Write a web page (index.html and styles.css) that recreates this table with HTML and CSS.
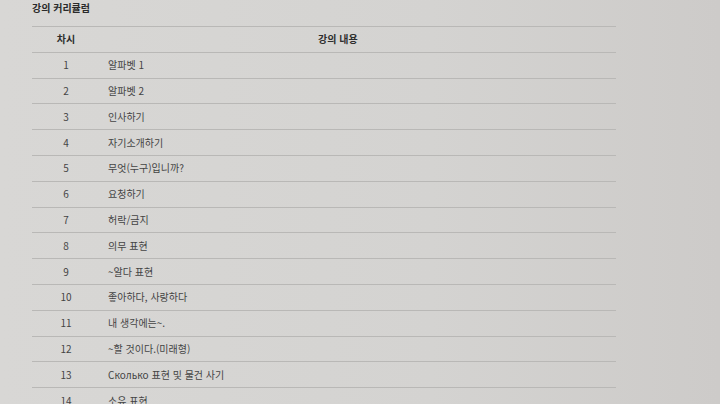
FILE: index.html
```html
<!DOCTYPE html>
<html lang="ko">
<head>
    <meta charset="UTF-8">
    <meta name="viewport" content="width=device-width, initial-scale=1.0">
    <title>강의 커리큘럼</title>
    <link rel="stylesheet" href="styles.css">
</head>
<body>
    <div class="curriculum">
        <h3>강의 커리큘럼</h3>
        <table class="lessons">
            <thead>
                <tr>
                    <th class="num">차시</th>
                    <th class="title">강의 내용</th>
                </tr>
            </thead>
            <tbody>
                <tr><td class="num">1</td><td>알파벳 1</td></tr>
                <tr><td class="num">2</td><td>알파벳 2</td></tr>
                <tr><td class="num">3</td><td>인사하기</td></tr>
                <tr><td class="num">4</td><td>자기소개하기</td></tr>
                <tr><td class="num">5</td><td>무엇(누구)입니까?</td></tr>
                <tr><td class="num">6</td><td>요청하기</td></tr>
                <tr><td class="num">7</td><td>허락/금지</td></tr>
                <tr><td class="num">8</td><td>의무 표현</td></tr>
                <tr><td class="num">9</td><td>~알다 표현</td></tr>
                <tr><td class="num">10</td><td>좋아하다, 사랑하다</td></tr>
                <tr><td class="num">11</td><td>내 생각에는~.</td></tr>
                <tr><td class="num">12</td><td>~할 것이다.(미래형)</td></tr>
                <tr><td class="num">13</td><td>Сколько 표현 및 물건 사기</td></tr>
                <tr><td class="num">14</td><td>소유 표현</td></tr>
            </tbody>
        </table>
    </div>
</body>
</html>
```

FILE: styles.css
```css
body {
    margin: 0;
    font-family: "Noto Sans CJK KR", "Noto Sans", sans-serif;
    background: linear-gradient(90deg, #d8d7d5 0%, #d4d3d1 60%, #cdcbc9 100%);
    color: #444;
    height: 404px;
    overflow: hidden;
}

.curriculum {
    padding-left: 32px;
    width: 584px;
}

.curriculum h3 {
    margin: 0;
    height: 26px;
    font-size: 10px;
    font-weight: bold;
    line-height: 15px;
    color: #2a2a2a;
}

.lessons {
    width: 100%;
    border-collapse: collapse;
    font-size: 10px;
}

.lessons th,
.lessons td {
    height: 24.8px;
    padding: 0;
    border-top: 1px solid #b9b8b6;
    border-bottom: 1px solid #b9b8b6;
    text-align: left;
    vertical-align: middle;
    line-height: 14px;
}

.lessons th {
    font-weight: bold;
    color: #2e2e2e;
}

.lessons .num {
    width: 68px;
    text-align: center;
}

.lessons th.title {
    padding-left: 218px;
}

.lessons td:not(.num) {
    padding-left: 8px;
}
```
